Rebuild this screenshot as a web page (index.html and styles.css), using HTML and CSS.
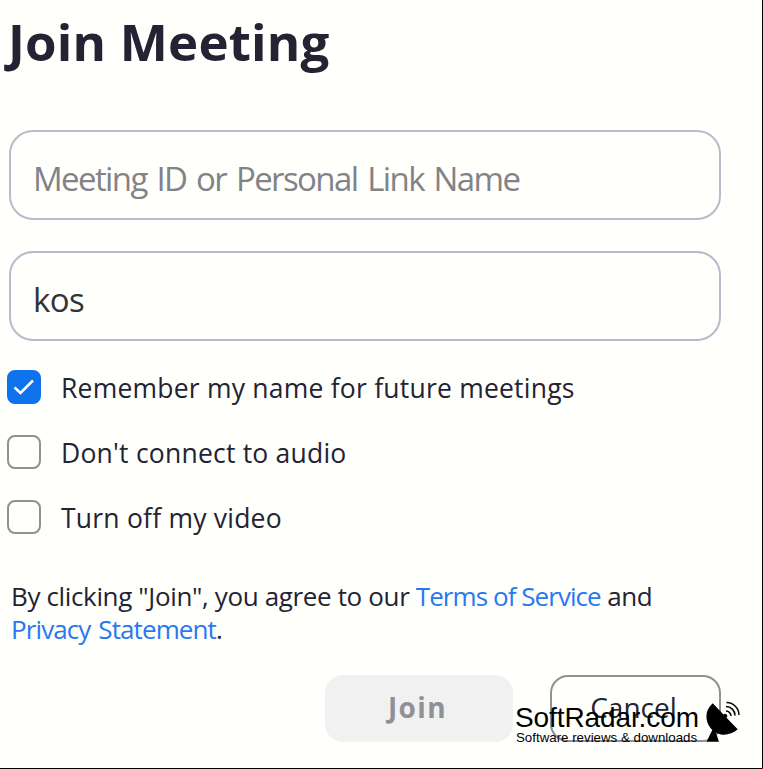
FILE: index.html
```html
<!DOCTYPE html>
<html lang="en">
<head>
    <meta charset="UTF-8">
    <title>Join Meeting</title>
    <link rel="stylesheet" href="styles.css">
</head>
<body>
    <div class="window">
        <form class="join-form" name="joinForm">
            <h1>Join Meeting</h1>

            <input class="text-field meeting-id" type="text" name="meetingId" placeholder="Meeting ID or Personal Link Name">
            <input class="text-field user-name" type="text" name="userName" value="kos">

            <div class="options">
                <label class="option">
                    <span class="check">
                        <input type="checkbox" name="remember" checked>
                        <svg viewBox="0 0 34 34"><path d="M7.500 17.500L13.500 23L26 10.500"/></svg>
                    </span>
                    <span class="option-text">Remember my name for future meetings</span>
                </label>
                <label class="option">
                    <span class="check"><input type="checkbox" name="noAudio"></span>
                    <span class="option-text">Don't connect to audio</span>
                </label>
                <label class="option">
                    <span class="check"><input type="checkbox" name="noVideo"></span>
                    <span class="option-text">Turn off my video</span>
                </label>
            </div>

            <p class="terms">By clicking "Join", you agree to our <a href="#">Terms of Service</a> and<br><a class="privacy" href="#">Privacy Statement</a>.</p>

            <div class="button-group">
                <button class="btn btn-join" type="submit" disabled>Join</button>
                <button class="btn btn-cancel" type="button">Cancel</button>
            </div>
        </form>

        <div class="watermark">
            <div class="watermark-text">
                <div class="site-name">SoftRadar.com</div>
                <div class="tagline">Software reviews &amp; downloads</div>
            </div>
            <svg class="dish" viewBox="0 0 36 42">
                <path d="M6.700 2.300C-1 9-1.500 19 4.500 27C11 35.500 23 36 31.700 28.300L20.500 16.700A2 2 0 1 0 17.500 13.500Z"/>
                <path d="M6.800 28L.5 40.700H13L9 29Z"/>
                <path class="wave" d="M20 10A5 5 0 0 1 25 15M20 5.500A9 9 0 0 1 29 14.500M20.500 1.500A12.500 12.500 0 0 1 33 14"/>
            </svg>
        </div>
        <span class="corner"></span>
    </div>
</body>
</html>
```

FILE: styles.css
```css
* {
    box-sizing: border-box;
}

body {
    margin: 0;
    background: #fffffc;
    color: #232333;
    font-family: "Open Sans", "Noto Sans", sans-serif;
}

.window {
    position: relative;
    width: 763px;
    height: 769px;
    border-right: 1px solid #000;
    border-bottom: 1px solid #000;
}

.join-form {
    display: flex;
    flex-direction: column;
    padding: 7px 41px 0 7px;
}

h1 {
    margin: 0 0 53px;
    padding-left: 1px;
    font-size: 51px;
    line-height: 69px;
    padding-bottom: 1px;
    font-weight: 700;
    letter-spacing: 0.2px;
    white-space: nowrap;
}

.text-field {
    height: 90px;
    margin: 0 0 31px 2px;
    padding: 6px 22px 0;
    border: 2px solid #babacc;
    border-radius: 24px;
    background: transparent;
    color: #333338;
    font-family: inherit;
    font-size: 33px;
    letter-spacing: -0.6px;
    outline: none;
}

.text-field::placeholder {
    color: #828288;
    letter-spacing: -1.6px;
    word-spacing: 2.7px;
    opacity: 1;
}

.user-name {
    margin-bottom: 29px;
}

.options {
    display: flex;
    flex-direction: column;
    gap: 31px;
}

.option {
    display: flex;
    align-items: center;
    gap: 20px;
    height: 34px;
    font-size: 26.5px;
    letter-spacing: 0.22px;
    white-space: nowrap;
}

.option-text {
    padding-top: 2px;
}

.check {
    display: grid;
    width: 34px;
    height: 34px;
}

.check input,
.check svg {
    grid-area: 1 / 1;
    width: 34px;
    height: 34px;
    margin: 0;
}

.check input {
    appearance: none;
    border: 2px solid #909096;
    border-radius: 8px;
}

.check input:checked {
    border-color: #0e72ed;
    background: #0e72ed;
}

.check svg {
    z-index: 1;
    fill: none;
    stroke: #fff;
    stroke-width: 2.5;
}

.terms {
    margin: 46px 0 0 4px;
    font-size: 26px;
    line-height: 32.5px;
    letter-spacing: -0.36px;
    white-space: nowrap;
}

.terms a {
    color: #2878f0;
    letter-spacing: -0.94px;
    text-decoration: none;
}

.terms .privacy {
    letter-spacing: -0.9px;
    word-spacing: 2px;
}

.button-group {
    display: flex;
    justify-content: flex-end;
    gap: 37px;
    margin-top: 30px;
}

.btn {
    height: 67px;
    padding: 0 0 3px;
    border: none;
    border-radius: 18px;
    font-family: inherit;
    font-size: 28px;
}

.btn-join {
    width: 188px;
    padding-right: 3px;
    background: #f1f1f2;
    color: #909096;
    font-weight: 700;
    letter-spacing: 1.4px;
}

.btn-cancel {
    width: 171px;
    padding-right: 4px;
    border: 2px solid #909096;
    background: transparent;
    color: #232333;
}

/* download site mark, sits over the cancel button */
.watermark {
    position: absolute;
    left: 514px;
    top: 701px;
    display: flex;
    gap: 7px;
    color: #000;
    font-family: "Liberation Sans", Arial, sans-serif;
    white-space: nowrap;
}

.watermark-text {
    width: 185px;
}

.site-name {
    padding: 2px 0 0 1px;
    font-size: 28px;
    line-height: 29px;
    letter-spacing: -0.1px;
}

.tagline {
    padding-left: 2px;
    font-size: 13.3px;
    line-height: 12px;
}

.dish {
    width: 36px;
    height: 42px;
}

.wave {
    fill: none;
    stroke: #000;
    stroke-width: 1.5;
}

.corner {
    position: absolute;
    right: -1px;
    bottom: -1px;
    width: 1px;
    height: 1px;
    background: #f00;
}
```
